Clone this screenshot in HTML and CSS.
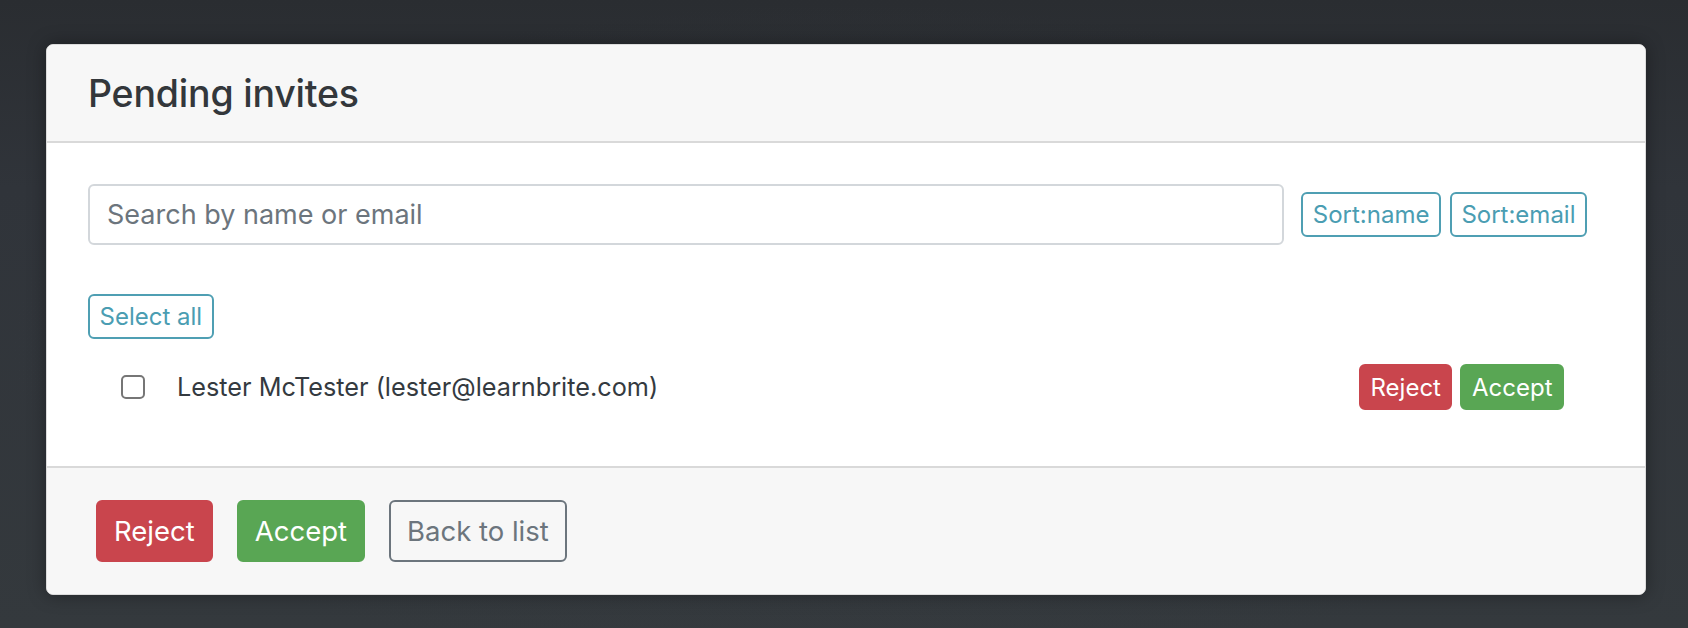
FILE: index.html
```html
<!DOCTYPE html>
<html lang="en">
<head>
<meta charset="utf-8">
<title>Pending invites</title>
<link rel="stylesheet" href="styles.css">
</head>
<body>
  <div class="card">
    <div class="card-header">
      <h3 class="card-title">Pending invites</h3>
    </div>
    <div class="card-body">
      <div class="search-row">
        <input class="search-input" type="text" placeholder="Search by name or email">
        <div class="sort-group">
          <button class="btn btn-sm btn-outline-info">Sort:name</button>
          <button class="btn btn-sm btn-outline-info">Sort:email</button>
        </div>
      </div>
      <div class="select-row">
        <button class="btn btn-sm btn-outline-info">Select all</button>
      </div>
      <ul class="invite-list">
        <li class="invite-item">
          <label class="invite-label">
            <input class="invite-check" type="checkbox">
            <span class="invite-name">Lester McTester (lester@learnbrite.com)</span>
          </label>
          <div class="invite-actions">
            <button class="btn btn-sm btn-danger">Reject</button>
            <button class="btn btn-sm btn-success">Accept</button>
          </div>
        </li>
      </ul>
    </div>
    <div class="card-footer">
      <button class="btn btn-danger">Reject</button>
      <button class="btn btn-success">Accept</button>
      <button class="btn btn-outline-secondary">Back to list</button>
    </div>
  </div>
</body>
</html>
```

FILE: styles.css
```css
* {
  box-sizing: border-box;
}

html,
body {
  height: 100%;
}

body {
  margin: 0;
  padding: 44px 0 0 46px;
  font-family: Inter, "Liberation Sans", sans-serif;
  color: #343a40;
  background:
    radial-gradient(ellipse at 50% 55%, rgba(60, 65, 70, 0.35) 0%, rgba(0, 0, 0, 0) 70%),
    linear-gradient(180deg, #2a2d31 0%, #30343a 30%, #34393d 100%);
}

/* card shell */
.card {
  width: 1600px;
  background: #fff;
  border: 1px solid #dcdcdc;
  border-radius: 7px;
  overflow: hidden;
  box-shadow: 0 0 18px rgba(0, 0, 0, 0.35);
}

.card-header {
  height: 98px;
  display: flex;
  align-items: center;
  padding: 0 41px;
  background: #f7f7f7;
  border-bottom: 2px solid #d9d9d9;
}

.card-title {
  margin: 0;
  font-size: 37.5px;
  font-weight: 500;
  letter-spacing: -0.2px;
  color: #33373b;
}

.card-body {
  padding: 41px 41px 56px 41px;
}

/* search + sort */
.search-row {
  display: flex;
  align-items: center;
  gap: 17px;
  padding-right: 17px;
}

.search-input {
  flex: 1;
  height: 61px;
  padding: 0 17px;
  font-family: inherit;
  font-size: 27px;
  color: #495057;
  border: 2px solid #d3d7db;
  border-radius: 6px;
  outline: none;
}

.search-input::placeholder {
  color: #6c757d;
}

.sort-group {
  display: flex;
  gap: 9px;
}

/* buttons */
.btn {
  font-family: inherit;
  display: inline-flex;
  align-items: center;
  justify-content: center;
  height: 62px;
  padding: 0 16px;
  font-size: 27.5px;
  border-radius: 6px;
  border: 2px solid transparent;
  cursor: pointer;
  background: transparent;
}

.btn-sm {
  height: 45px;
  padding: 0 9.5px;
  font-size: 24px;
  border-radius: 6px;
}

.btn-outline-info {
  color: #4a9db2;
  border-color: #4f9fb3;
  background: #fff;
}

.btn-danger {
  color: #fff;
  background: #c9454d;
  border-color: #c9454d;
}

.btn-success {
  color: #fff;
  background: #59a654;
  border-color: #59a654;
}

.btn-outline-secondary {
  color: #6c757d;
  border-color: #6c757d;
  background: #f7f7f7;
}

/* list */
.select-row {
  margin-top: 49px;
}

.invite-list {
  list-style: none;
  margin: 25px 0 0;
  padding: 0 40px 0 33px;
}

.invite-item {
  display: flex;
  align-items: center;
  justify-content: space-between;
}

.invite-label {
  display: flex;
  align-items: center;
  gap: 32px;
  font-size: 25.25px;
}

.invite-check {
  appearance: none;
  -webkit-appearance: none;
  margin: 0;
  width: 24px;
  height: 24px;
  border: 2px solid #767676;
  border-radius: 5px;
  background: #fff;
}

.invite-actions {
  display: flex;
  gap: 8px;
}

.invite-actions .btn-sm {
  height: 46px;
  padding: 0 9.5px;
}

/* footer */
.card-footer {
  display: flex;
  gap: 24px;
  padding: 32px 49px;
  background: #f7f7f7;
  border-top: 2px solid #d9d9d9;
}
```
